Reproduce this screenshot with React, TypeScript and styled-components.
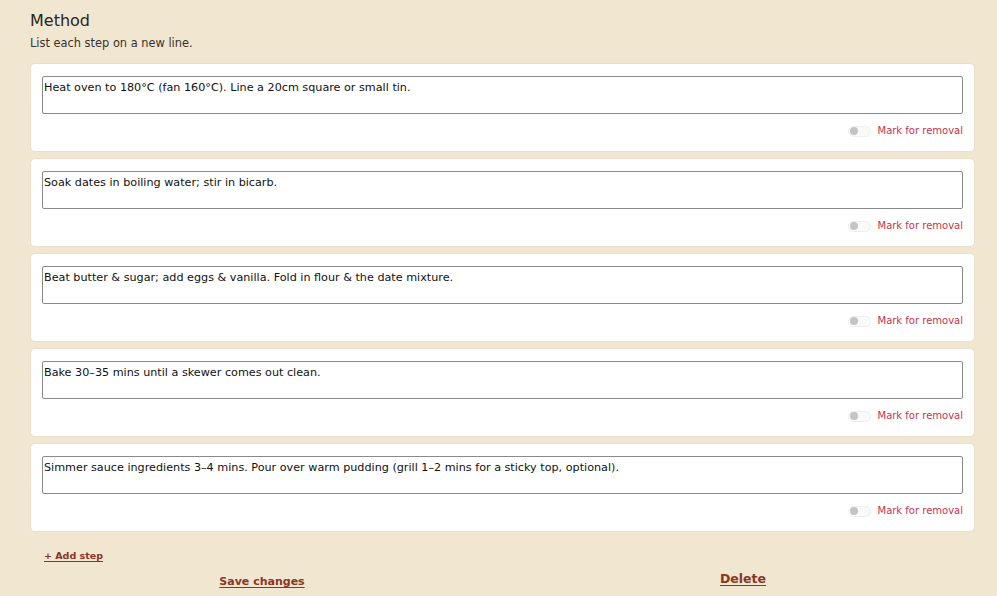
import React from "react";
import styled, { createGlobalStyle } from "styled-components";

const Global = createGlobalStyle`
  html, body { margin: 0; padding: 0; background: #f1e6d0; }
  body { font-family: "DejaVu Sans", "Noto Sans", sans-serif; color: #2b2420; }
  * { box-sizing: border-box; }
`;

const Page = styled.div`
  padding: 11px 22px 0 30px;
  width: 997px;
  height: 596px;
  overflow: hidden;
`;

const Title = styled.h2`
  margin: 0;
  font-size: 16px;
  font-weight: 400;
  line-height: 20px;
  color: #2b2420;
`;

const Hint = styled.p`
  margin: 5px 0 13px;
  font-size: 11.4px;
  line-height: 14px;
  color: #3a322c;
`;

const Steps = styled.div`
  display: flex;
  flex-direction: column;
  gap: 6px;
`;

const Card = styled.div`
  background: #fff;
  border: 1px solid #e9dfcc;
  border-radius: 5px;
  padding: 12px 11px 13px;
  display: flex;
  flex-direction: column;
  gap: 10px;
`;

const StepInput = styled.textarea`
  display: block;
  width: 100%;
  height: 38px;
  resize: none;
  border: 1px solid #8a8a8a;
  border-radius: 2px;
  padding: 4px 1px;
  font-family: inherit;
  font-size: 11.2px;
  line-height: 14px;
  color: #111;
  background: #fff;
  outline: none;
`;

const RemoveRow = styled.label`
  display: flex;
  justify-content: flex-end;
  align-items: center;
  gap: 7px;
  font-size: 10px;
  color: #c8334f;
  line-height: 14px;
`;

const Toggle = styled.span`
  width: 23px;
  height: 11px;
  border-radius: 6px;
  border: 1px solid #eeeeee;
  background: #fafafa;
  display: flex;
  align-items: center;
  padding: 0 1px;
  &::before {
    content: "";
    width: 8px;
    height: 8px;
    border-radius: 50%;
    background: #c4c4c4;
  }
`;

const LinkButton = styled.button<{ $size: number }>`
  border: none;
  background: none;
  padding: 0;
  font-family: inherit;
  font-weight: 700;
  font-size: ${(p) => p.$size}px;
  color: #8a3526;
  text-decoration: underline;
  text-underline-offset: 2px;
  cursor: pointer;
`;

const AddRow = styled.div`
  padding: 15px 0 0 14px;
  line-height: 14px;
`;

const Actions = styled.div`
  display: grid;
  grid-template-columns: 1fr 1fr;
  column-gap: 17px;
  margin-top: 10px;
  align-items: start;
`;

const ActionCell = styled.div<{ $offset: number }>`
  display: flex;
  justify-content: center;
  margin-top: ${(p) => p.$offset}px;
`;

const steps = [
  "Heat oven to 180°C (fan 160°C). Line a 20cm square or small tin.",
  "Soak dates in boiling water; stir in bicarb.",
  "Beat butter & sugar; add eggs & vanilla. Fold in flour & the date mixture.",
  "Bake 30–35 mins until a skewer comes out clean.",
  "Simmer sauce ingredients 3–4 mins. Pour over warm pudding (grill 1–2 mins for a sticky top, optional).",
];

export default function App() {
  return (
    <>
      <Global />
      <Page>
        <Title>Method</Title>
        <Hint>List each step on a new line.</Hint>
        <Steps>
          {steps.map((s, i) => (
            <Card key={i}>
              <StepInput defaultValue={s} />
              <RemoveRow>
                <Toggle />
                Mark for removal
              </RemoveRow>
            </Card>
          ))}
        </Steps>
        <AddRow>
          <LinkButton $size={9.5}>+ Add step</LinkButton>
        </AddRow>
        <Actions>
          <ActionCell $offset={4}>
            <LinkButton $size={11}>Save changes</LinkButton>
          </ActionCell>
          <ActionCell $offset={0}>
            <LinkButton $size={12.5}>Delete</LinkButton>
          </ActionCell>
        </Actions>
      </Page>
    </>
  );
}
